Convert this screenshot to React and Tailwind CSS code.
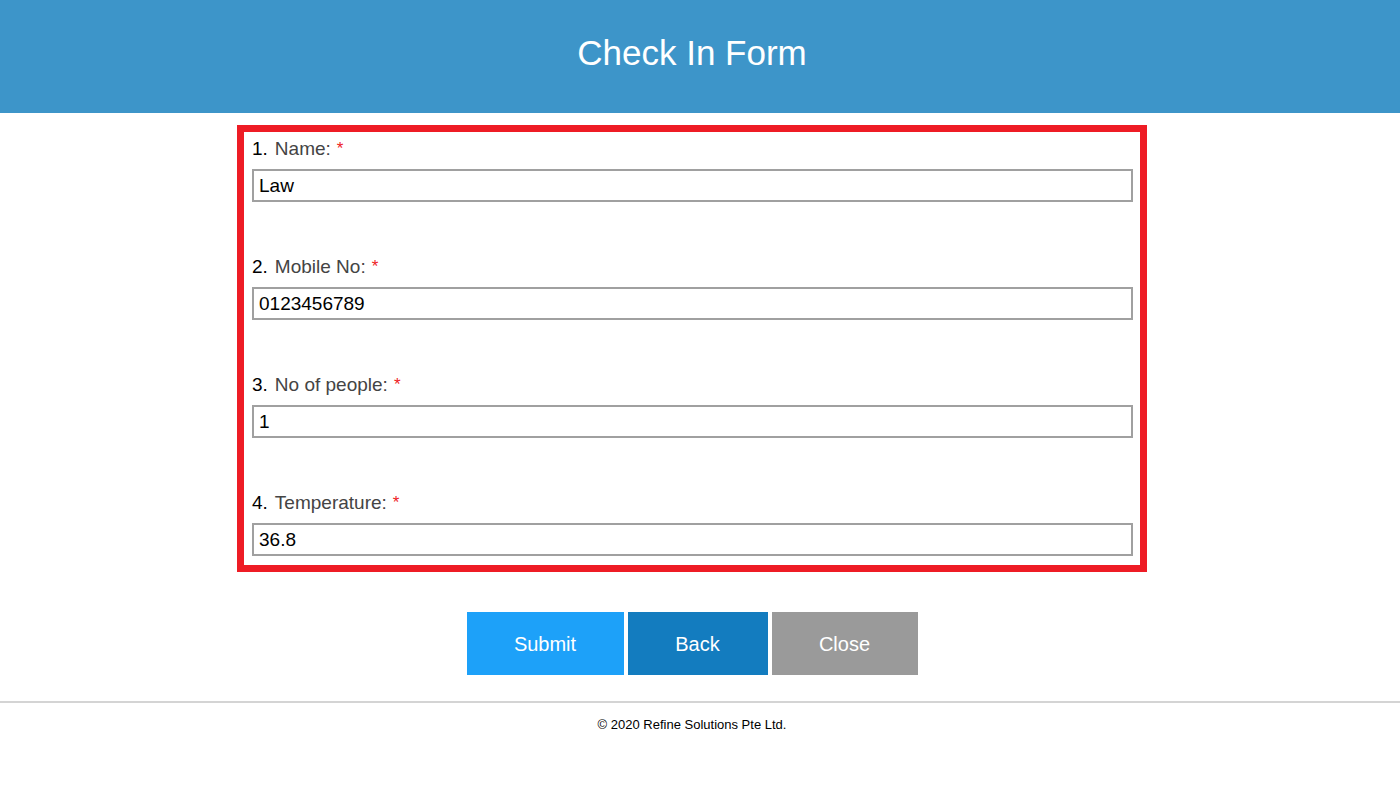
const fields = [
  { n: "1.", label: "Name:", value: "Law" },
  { n: "2.", label: "Mobile No:", value: "0123456789" },
  { n: "3.", label: "No of people:", value: "1" },
  { n: "4.", label: "Temperature:", value: "36.8" },
];

export default function App() {
  return (
    <div className="min-h-[785px] bg-white font-['Liberation_Sans',Arial,sans-serif]">
      <header className="h-[113px] bg-[#3d95c9]">
        <div className="flex h-full w-[1384px] items-center justify-center pb-[8px]">
          <h1 className="text-[35px] leading-none text-white">Check In Form</h1>
        </div>
      </header>

      <div className="w-[1384px]">
        <form className="mx-auto mt-[12px] w-[910px] border-[7px] border-[#ee1c25] pl-[8px] pr-[7px] pt-[6px] pb-[9px]">
          {fields.map((f, i) => (
            <div key={f.n} className={i > 0 ? "mt-[54px]" : ""}>
              <div className="flex items-start text-[19px] leading-[22px]">
                <span className="text-black">{f.n}</span>
                <span className="ml-[7px] text-[#444]">{f.label}</span>
                <span className="ml-[6px] mt-[2px] text-[17px] leading-[18px] text-[#ee1c25]">*</span>
              </div>
              <input
                readOnly
                value={f.value}
                className="mt-[9px] block h-[33px] w-full border-2 border-[#a0a0a0] px-[5px] text-[19px] text-black outline-none"
              />
            </div>
          ))}
        </form>

        <div className="mt-[40px] flex justify-center gap-[4px]">
          <button className="h-[63px] w-[157px] bg-[#1da1f9] text-[20px] text-white">Submit</button>
          <button className="h-[63px] w-[140px] bg-[#137cbf] text-[20px] text-white">Back</button>
          <button className="h-[63px] w-[146px] bg-[#9a9a9a] text-[20px] text-white">Close</button>
        </div>
      </div>

      <hr className="mt-[26px] border-t-2 border-[#d4d4d4]" />
      <div className="w-[1384px] pt-[12px] text-center text-[13px] text-black">
        © 2020 Refine Solutions Pte Ltd.
      </div>
    </div>
  );
}
